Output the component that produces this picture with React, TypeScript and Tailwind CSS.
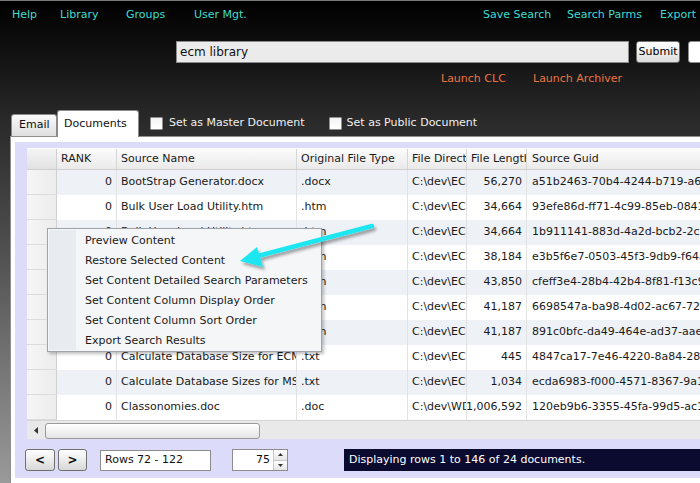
import React from "react";

const rows = [
  { rank: "0", name: "BootStrap Generator.docx", type: ".docx", dir: "C:\\dev\\ECM", len: "56,270", guid: "a51b2463-70b4-4244-b719-a6f3c2d1e0b9" },
  { rank: "0", name: "Bulk User Load Utility.htm", type: ".htm", dir: "C:\\dev\\ECM", len: "34,664", guid: "93efe86d-ff71-4c99-85eb-0841a2b3c4d5" },
  { rank: "0", name: "Bulk User Load Utility.htm", type: ".htm", dir: "C:\\dev\\ECM", len: "34,664", guid: "1b911141-883d-4a2d-bcb2-2c0e1f2a3b4c" },
  { rank: "0", name: "Bulk Load Utility Help.htm", type: ".htm", dir: "C:\\dev\\ECM", len: "38,184", guid: "e3b5f6e7-0503-45f3-9db9-f64a5b6c7d8e" },
  { rank: "0", name: "Bulk Load Utility Notes.htm", type: ".htm", dir: "C:\\dev\\ECM", len: "43,850", guid: "cfeff3e4-28b4-42b4-8f81-f13c9d8e7f6a" },
  { rank: "0", name: "Bulk Load Utility Setup.htm", type: ".htm", dir: "C:\\dev\\ECM", len: "41,187", guid: "6698547a-ba98-4d02-ac67-72b1c2d3e4f5" },
  { rank: "0", name: "Bulk Load Utility Setup.htm", type: ".htm", dir: "C:\\dev\\ECM", len: "41,187", guid: "891c0bfc-da49-464e-ad37-aae1f2a3b4c5" },
  { rank: "0", name: "Calculate Database Size for ECM.txt", type: ".txt", dir: "C:\\dev\\ECM", len: "445", guid: "4847ca17-7e46-4220-8a84-28d1e2f3a4b5" },
  { rank: "0", name: "Calculate Database Sizes for MSSQL.txt", type: ".txt", dir: "C:\\dev\\ECM", len: "1,034", guid: "ecda6983-f000-4571-8367-9a1b2c3d4e5f" },
  { rank: "0", name: "Classonomies.doc", type: ".doc", dir: "C:\\dev\\WDM", len: "21,006,592", guid: "120eb9b6-3355-45fa-99d5-ac1d2e3f4a5b" },
];

const menuItems = [
  "Preview Content",
  "Restore Selected Content",
  "Set Content Detailed Search Parameters",
  "Set Content Column Display Order",
  "Set Content Column Sort Order",
  "Export Search Results",
];

function Checkbox() {
  return <div className="w-[13px] h-[13px] shrink-0 border border-[#8f8f8f] bg-gradient-to-b from-[#f4f4f4] to-white rounded-[1px]" />;
}

export default function App() {
  return (
    <div className="relative w-[700px] h-[483px] overflow-hidden flex flex-col border-t border-[#7a7a7a] bg-[linear-gradient(180deg,#000_0px,#141414_60px,#2a2a2a_120px,#4a4a4a_230px,#9a9a9a_483px)] font-['DejaVu_Sans',sans-serif] text-[11px]">
      {/* Nav */}
      <div className="h-[29px] shrink-0 flex items-center text-[#3fdccf] whitespace-nowrap">
        <span className="ml-[12px] w-[48px] shrink-0">Help</span>
        <span className="w-[66px] shrink-0">Library</span>
        <span className="w-[68px] shrink-0">Groups</span>
        <span className="w-[289px] shrink-0">User Mgt.</span>
        <span className="w-[84px] shrink-0">Save Search</span>
        <span className="w-[93px] shrink-0">Search Parms</span>
        <span className="shrink-0">Export</span>
      </div>
      {/* Search */}
      <div className="mt-[11px] h-[22px] shrink-0 flex">
        <div className="ml-[176px] w-[453px] shrink-0 h-[22px] bg-[#ebebeb] border border-[#8c8c8c] flex items-center pl-[3px] text-[12px] text-[#111]">ecm library</div>
        <div className="ml-[7px] w-[44px] shrink-0 h-[22px] rounded-[3px] border border-[#707070] bg-gradient-to-b from-white to-[#dcdcdc] flex items-center justify-center text-[11px] text-black">Submit</div>
        <div className="ml-[8px] w-[60px] h-[22px] rounded-[3px] bg-white border border-[#8c8c8c] shrink-0" />
      </div>
      {/* Launch */}
      <div className="mt-[7px] h-[18px] shrink-0 flex items-center text-[#ec7440] whitespace-nowrap">
        <span className="ml-[441px] w-[92px] shrink-0">Launch CLC</span>
        <span className="shrink-0">Launch Archiver</span>
      </div>
      {/* Tabs */}
      <div className="mt-[22px] h-[26px] shrink-0 flex items-end relative z-10 whitespace-nowrap">
        <div className="ml-[11px] w-[46px] shrink-0 h-[22px] border border-[#8a8a8a] border-b-0 rounded-t-[3px] bg-gradient-to-b from-[#fafafa] to-[#dedede] flex items-center pl-[7px] text-[#111]">Email</div>
        <div className="w-[82px] shrink-0 h-[27px] -mb-[1px] border border-[#8a8a8a] border-b-0 rounded-t-[3px] bg-white flex items-start pt-[5px] pl-[6px] text-[#111]">Documents</div>
        <div className="self-center flex items-center ml-[11px] shrink-0 text-[#f0f0f0]">
          <Checkbox />
          <span className="ml-[6px]">Set as Master Document</span>
        </div>
        <div className="self-center flex items-center ml-[24px] shrink-0 text-[#f0f0f0]">
          <Checkbox />
          <span className="ml-[5px]">Set as Public Document</span>
        </div>
      </div>
      {/* Panel */}
      <div className="ml-[10px] flex-1 border border-[#8e8e8e] border-b-0 border-r-0 bg-white pt-[5px] pl-[4px]">
        <div className="h-[336px] bg-[#dcdcfa] pt-[6px] pl-[12px] flex flex-col overflow-hidden">
          {/* Grid */}
          <div className="w-[720px] shrink-0 bg-white text-[#1a1a1a] overflow-hidden">
            <div className="flex h-[22px] bg-gradient-to-b from-[#fcfcfc] to-[#eaeaea] border-b border-[#cfcfcf] pt-[1px]">
              <div className="w-[30px] shrink-0 border-r border-[#d0d0d0] bg-gradient-to-b from-[#f4f4f4] to-[#e2e2e2]" />
              <div className="w-[60px] shrink-0 border-r border-[#d6d6d6] pl-[4px] flex items-center">RANK</div>
              <div className="w-[180px] shrink-0 border-r border-[#d6d6d6] pl-[4px] flex items-center">Source Name</div>
              <div className="w-[111px] shrink-0 border-r border-[#d6d6d6] pl-[4px] flex items-center">Original File Type</div>
              <div className="w-[59px] shrink-0 border-r border-[#d6d6d6] pl-[4px] flex items-center overflow-hidden whitespace-nowrap">File Directory</div>
              <div className="w-[60px] shrink-0 border-r border-[#d6d6d6] pl-[4px] flex items-center overflow-hidden whitespace-nowrap">File Length</div>
              <div className="flex-1 pl-[5px] flex items-center">Source Guid</div>
            </div>
            {rows.map((r, i) => (
              <div key={i} className={`flex h-[25px] whitespace-nowrap ${i % 2 === 0 ? "bg-[#eef1f6]" : "bg-white"}`}>
                <div className="w-[30px] shrink-0 border-r border-[#d0d0d0] border-b border-b-[#dcdcdc] bg-gradient-to-r from-[#f6f6f6] to-[#ececec]" />
                <div className="w-[60px] shrink-0 border-r border-[#e2e2e2] pr-[4px] flex items-center justify-end">{r.rank}</div>
                <div className="w-[180px] shrink-0 border-r border-[#e2e2e2] pl-[4px] flex items-center overflow-hidden">{r.name}</div>
                <div className="w-[111px] shrink-0 border-r border-[#e2e2e2] pl-[4px] flex items-center overflow-hidden">{r.type}</div>
                <div className="w-[59px] shrink-0 border-r border-[#e2e2e2] pl-[4px] flex items-center overflow-hidden">{r.dir}</div>
                <div className="w-[60px] shrink-0 border-r border-[#e2e2e2] pr-[4px] flex items-center justify-end overflow-hidden">{r.len}</div>
                <div className="flex-1 pl-[5px] flex items-center overflow-hidden">{r.guid}</div>
              </div>
            ))}
            {/* Scrollbar */}
            <div className="h-[19px] flex items-center bg-[#e9e9e9] border-t border-[#d4d4d4] pt-[1px]">
              <div className="w-[18px] h-[16px] shrink-0 flex items-center justify-center">
                <svg width="4" height="7" viewBox="0 0 4 7"><path d="M4 0 L0 3.5 L4 7 Z" fill="#333" /></svg>
              </div>
              <div className="w-[215px] shrink-0 h-[16px] rounded-[3px] border border-[#9a9a9a] bg-gradient-to-b from-white to-[#e4e4e4]" />
            </div>
          </div>
          {/* Pager */}
          <div className="mt-[10px] -ml-[2px] h-[22px] shrink-0 flex items-center whitespace-nowrap">
            <div className="w-[30px] shrink-0 h-[22px] rounded-[3px] border border-[#707070] bg-gradient-to-b from-white to-[#d8d8d8] flex items-center justify-center text-[12px] font-bold text-[#111]">&lt;</div>
            <div className="ml-[3px] w-[29px] shrink-0 h-[22px] rounded-[3px] border border-[#707070] bg-gradient-to-b from-white to-[#d8d8d8] flex items-center justify-center text-[12px] font-bold text-[#111]">&gt;</div>
            <div className="ml-[13px] w-[111px] shrink-0 h-[21px] mt-[1px] bg-white border border-[#8c8c8c] flex items-center pl-[4px] text-[#111]">Rows 72 - 122</div>
            <div className="ml-[21px] w-[56px] shrink-0 h-[22px] bg-white border border-[#8c8c8c] flex items-center text-[#111]">
              <span className="flex-1 text-right pr-[3px]">75</span>
              <div className="w-[14px] h-[20px] flex flex-col border-l border-[#c8c8c8]">
                <div className="flex-1 flex items-center justify-center bg-gradient-to-b from-white to-[#e6e6e6] border-b border-[#c8c8c8]">
                  <svg width="5" height="3" viewBox="0 0 5 3"><path d="M0 3 L2.5 0 L5 3 Z" fill="#333" /></svg>
                </div>
                <div className="flex-1 flex items-center justify-center bg-gradient-to-b from-white to-[#e6e6e6]">
                  <svg width="5" height="3" viewBox="0 0 5 3"><path d="M0 0 L2.5 3 L5 0 Z" fill="#333" /></svg>
                </div>
              </div>
            </div>
            <div className="ml-[56px] w-[400px] shrink-0 h-[22px] bg-[#0b0b2f] flex items-center pl-[5px] pt-[1px] text-white">Displaying rows 1 to 146 of 24 documents.</div>
          </div>
        </div>
      </div>

      {/* Context menu */}
      <div className="absolute left-[47px] top-[227px] w-[275px] h-[124px] border border-[#9ea3aa] bg-[#f5f6f8] shadow-[2px_2px_3px_rgba(0,0,0,0.25)] text-[#1a1a1a] z-20">
        <div className="absolute left-[1px] top-[1px] bottom-[1px] w-[27px] bg-[#e8ebf0]" />
        <div className="relative pt-[2px]">
          {menuItems.map((m) => (
            <div key={m} className="h-[20px] flex items-center pl-[37px] whitespace-nowrap">{m}</div>
          ))}
        </div>
      </div>

      {/* Arrow */}
      <svg className="absolute left-0 top-0 z-30 pointer-events-none" width="700" height="483" viewBox="0 0 700 483">
        <defs>
          <filter id="sh" x="-20%" y="-20%" width="140%" height="160%">
            <feDropShadow dx="2" dy="3" stdDeviation="1.5" floodColor="#000" floodOpacity="0.35" />
          </filter>
        </defs>
        <g filter="url(#sh)">
          <line x1="372" y1="225" x2="254" y2="256" stroke="#1fe6f0" strokeWidth="4.5" strokeLinecap="round" />
          <polygon points="240,260 257,246 263,266" fill="#1fe6f0" />
        </g>
      </svg>
    </div>
  );
}
